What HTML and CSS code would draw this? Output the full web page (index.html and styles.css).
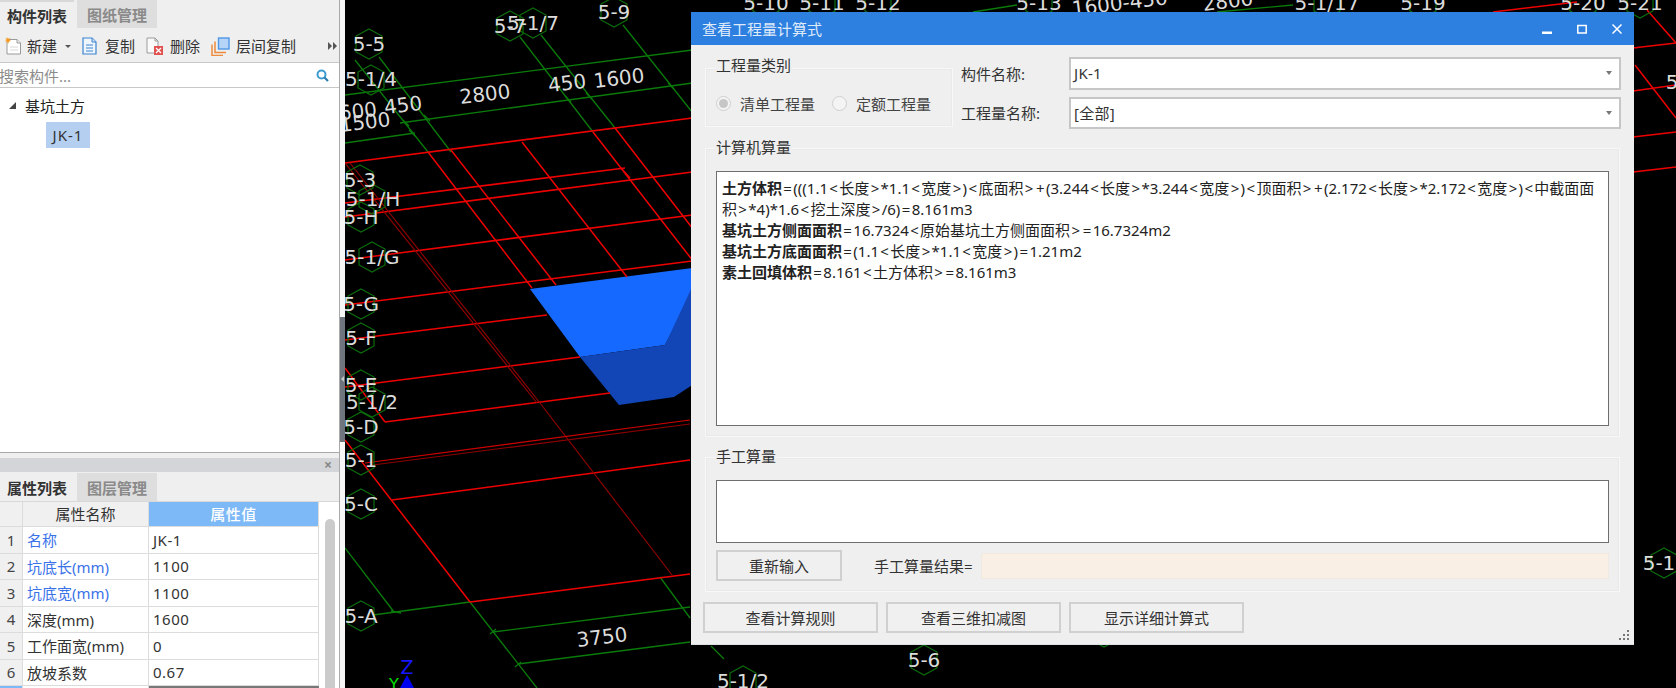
FILE: index.html
```html
<!DOCTYPE html>
<html lang="zh-CN">
<head>
<meta charset="utf-8">
<title>查看工程量计算式</title>
<link rel="stylesheet" href="styles.css">
</head>
<body>
<div class="app">
  <aside class="side">
    <section class="panel-top">
      <div class="tabs">
        <div class="tab active">构件列表</div>
        <div class="tab">图纸管理</div>
      </div>
      <div class="toolbar">
        <svg class="ico ico-new" viewBox="0 0 18 18"><path d="M5 2.500h8l3.500 3.500v11H3V5" fill="#fff" stroke="#9a9a9a"/><path d="M13 2.500V6h3.500" fill="#eee" stroke="#9a9a9a"/><path d="M6 10h8M6 13h8" stroke="#d8d8d8"/><path d="M3.500 0l.9 1.800L6.500 1 5.400 3l1.600 1-2 .4L4 7 3 4.600 1 4.500 2.400 3 1.500 1l2 .7z" fill="#f39a1e"/></svg>
        <span class="tool-label t-new">新建</span>
        <span class="caret"></span>
        <svg class="ico ico-copy" viewBox="0 0 15 18"><path d="M1 1h9l4 4v12H1z" fill="#eef5fd" stroke="#3c84cf" stroke-width="1.200"/><path d="M10 1v4h4" fill="#cfe2f7" stroke="#3c84cf"/><path d="M4 8h7M4 11h7M4 14h7" stroke="#3c84cf"/></svg>
        <span class="tool-label t-copy">复制</span>
        <svg class="ico ico-del" viewBox="0 0 18 18"><path d="M1 1h8l3 3v12H1z" fill="#fafafa" stroke="#9b9b9b"/><path d="M9 1v3h3" fill="none" stroke="#9b9b9b"/><rect x="8" y="9" width="9" height="9" fill="#e0514f"/><path d="M10 11l5 5M15 11l-5 5" stroke="#fff" stroke-width="1.300"/></svg>
        <span class="tool-label t-del">删除</span>
        <svg class="ico ico-floor" viewBox="0 0 19 19"><path d="M1 7.500v11h11" fill="none" stroke="#ee8a3c" stroke-width="1.500"/><path d="M4 4.500v11h11" fill="none" stroke="#ee8a3c" stroke-width="1.500"/><rect x="7.500" y="1" width="10.500" height="11" fill="#b6d4f8" stroke="#4f98e6" stroke-width="1.400"/></svg>
        <span class="tool-label t-floor">层间复制</span>
        <svg class="more" viewBox="0 0 9 8"><path d="M0 0l4 4-4 4zM5 0l4 4-4 4z" fill="#555"/></svg>
      </div>
      <div class="search">
        <span class="search-text">搜索构件...</span>
        <svg class="search-ico" viewBox="0 0 13 13"><circle cx="5.500" cy="5.500" r="4" fill="none" stroke="#3d9bd0" stroke-width="2"/><path d="M8.500 8.500l3.500 3.500" stroke="#2b7fae" stroke-width="2.200"/></svg>
      </div>
      <div class="tree">
        <div class="tree-root"><span class="tree-arrow"></span><span>基坑土方</span></div>
        <div class="tree-leaf">JK-1</div>
      </div>
    </section>
    <section class="panel-bottom">
      <div class="dock-head"><span class="dock-close">×</span></div>
      <div class="tabs tabs-props">
        <div class="tab active">属性列表</div>
        <div class="tab">图层管理</div>
      </div>
      <div class="props">
        <div class="prop-table">
          <div class="prop-row prop-head"><div class="c-idx"></div><div class="c-name">属性名称</div><div class="c-val">属性值</div></div>
          <div class="prop-row"><div class="c-idx">1</div><div class="c-name link">名称</div><div class="c-val">JK-1</div></div>
          <div class="prop-row"><div class="c-idx">2</div><div class="c-name link">坑底长(mm)</div><div class="c-val">1100</div></div>
          <div class="prop-row"><div class="c-idx">3</div><div class="c-name link">坑底宽(mm)</div><div class="c-val">1100</div></div>
          <div class="prop-row"><div class="c-idx">4</div><div class="c-name">深度(mm)</div><div class="c-val">1600</div></div>
          <div class="prop-row"><div class="c-idx">5</div><div class="c-name">工作面宽(mm)</div><div class="c-val">0</div></div>
          <div class="prop-row"><div class="c-idx">6</div><div class="c-name">放坡系数</div><div class="c-val">0.67</div></div>
          <div class="prop-row prop-sel"><div class="c-idx"></div><div class="c-name"></div><div class="c-val"></div></div>
        </div>
        <div class="scroll"><div class="thumb"></div></div>
      </div>
    </section>
  </aside>
  <div class="gutter"><div class="splitter"><span class="split-arrow"></span></div></div>
  <main class="canvas">
    <svg class="scene" viewBox="345 0 1331 688">
      <defs>
        <path id="hex" d="M0-15L13-8V8L0 15L-13 8V-8Z" fill="none" stroke="#0b6e0b" stroke-width="1.200"/>
      </defs>
      <g class="blue">
        <polygon points="530,289 700,267 700,277 665,345 580,357" fill="#1669ff"/>
        <polygon points="580,357 665,345 700,270 700,380 674,397 619,405" fill="#1245b5"/>
      </g>
      <g class="green" fill="none" stroke="#0a7a0a" stroke-width="1.300">
        <path d="M345 95L700 49M400 123L700 82M345 143L415 133"/>
        <path d="M379 57L451 152M355 60L428 152M520 37L593 132M541 35L615 128M623 25L700 122"/>
        <path d="M345 548L394 612M373 615L470 602M493 632L690 607M518 664L690 642M660 577L690 618"/>
        <path d="M470 602L537 688M973 12L1017 5M1217 12L1293 5M711 646L724 659"/>
        <path d="M403 120l6 6M424 115l6 6M409 130l6 6M565 96l6 6M586 93l6 6M668 83l6 6M391 611l10 2M490 634l6-5M515 667l6-5"/>
      </g>
      <g class="red" fill="none" stroke="#ee0000" stroke-width="1.500">
        <path d="M345 163L700 117"/>
        <path d="M345 203L625 168M345 217L700 171M345 260L700 214M345 305L700 260M345 340L547 315"/>
        <path d="M428 152L532 288M451 150L556 285M522 142L627 277M593 132L700 270M615 128L700 238M621 168L630 178"/>
        <path d="M345 368L385 422M345 440L470 602"/>
        <path d="M345 387L580 357M385 422L610 393M392 500L690 460M470 602L690 574"/>
        <path d="M1493 12L1577 2M1633 48L1676 43M1633 91L1676 85M1633 137L1676 132M1633 172L1676 167M1647 10L1676 43M1635 65L1676 118"/>
      </g>
      <g class="darkred" fill="none" stroke="#8f0000" stroke-width="1.200">
        <path d="M350 163L540 403L672 575M345 163L537 403M365 466L690 424"/>
        <path d="M365 463L690 420" stroke="#d00000"/>
      </g>
      <g class="hexes">
        <use href="#hex" x="369" y="44"/><use href="#hex" x="510" y="26"/><use href="#hex" x="533" y="23"/><use href="#hex" x="614" y="12"/>
        <use href="#hex" x="371" y="80"/><use href="#hex" x="360" y="180"/><use href="#hex" x="372" y="199"/><use href="#hex" x="361" y="217"/>
        <use href="#hex" x="372" y="257"/><use href="#hex" x="361" y="304"/><use href="#hex" x="361" y="338"/><use href="#hex" x="361" y="385"/>
        <use href="#hex" x="372" y="402"/><use href="#hex" x="361" y="427"/><use href="#hex" x="361" y="460"/><use href="#hex" x="361" y="504"/>
        <use href="#hex" x="361" y="616"/><use href="#hex" x="766" y="3"/><use href="#hex" x="822" y="3"/><use href="#hex" x="878" y="3"/>
        <use href="#hex" x="1039" y="3"/><use href="#hex" x="1327" y="3"/><use href="#hex" x="1423" y="3"/><use href="#hex" x="1583" y="3"/>
        <use href="#hex" x="1640" y="3"/><use href="#hex" x="1664" y="563"/><use href="#hex" x="924" y="660"/><use href="#hex" x="1104" y="632"/><use href="#hex" x="743" y="681"/>
      </g>
      <g class="labels">
        <text x="369" y="51">5-5</text><text x="510" y="33">5-7</text><text x="533" y="30">5-1/7</text><text x="614" y="19">5-9</text>
        <text x="371" y="86">5-1/4</text><text x="360" y="187">5-3</text><text x="373" y="206">5-1/H</text><text x="361" y="224">5-H</text>
        <text x="372" y="264">5-1/G</text><text x="361" y="311">5-G</text><text x="361" y="345">5-F</text><text x="361" y="392">5-E</text>
        <text x="372" y="409">5-1/2</text><text x="361" y="434">5-D</text><text x="361" y="467">5-1</text><text x="361" y="511">5-C</text>
        <text x="361" y="623">5-A</text><text x="766" y="10">5-10</text><text x="822" y="10">5-11</text><text x="878" y="10">5-12</text>
        <text x="1039" y="10">5-13</text><text x="1327" y="10">5-1/17</text><text x="1423" y="10">5-19</text><text x="1583" y="10">5-20</text>
        <text x="1640" y="10">5-21</text><text x="1672" y="89">5</text><text x="1659" y="570">5-1</text><text x="924" y="667">5-6</text><text x="743" y="688">5-1/2</text>
        <text x="358" y="118" transform="rotate(-7 358 112)">600</text>
        <text x="365" y="129" transform="rotate(-7 365 122)">1500</text>
        <text x="403" y="112" transform="rotate(-7 403 105)">450</text>
        <text x="485" y="101" transform="rotate(-7 485 94)">2800</text>
        <text x="567" y="90" transform="rotate(-7 567 83)">450</text>
        <text x="619" y="85" transform="rotate(-7 619 78)">1600</text>
        <text x="602" y="644" transform="rotate(-7 602 637)">3750</text>
        <text x="1120" y="10" transform="rotate(-7 1120 5)">1600-450</text>
        <text x="1228" y="8" transform="rotate(-7 1228 2)">2800</text>
      </g>
      <text class="axis-z" x="407" y="674">Z</text>
      <text class="axis-y" x="394" y="690">Y</text>
      <polygon points="407,675 400,688 414,688" fill="#0000f0"/>
    </svg>
  </main>
  <div class="dialog">
    <header class="titlebar">
      <span class="title">查看工程量计算式</span>
      <div class="win-btns">
        <svg viewBox="0 0 10 10" class="win"><rect x="0" y="7.500" width="10" height="2.500" fill="#fff"/></svg>
        <svg viewBox="0 0 10 10" class="win"><rect x=".8" y="1.500" width="8.400" height="7.500" fill="none" stroke="#fff" stroke-width="1.500"/></svg>
        <svg viewBox="0 0 10 10" class="win"><path d="M.5.500l9 9M9.500.500l-9 9" stroke="#fff" stroke-width="1.500"/></svg>
      </div>
    </header>
    <div class="dlg-body">
      <div class="top-row">
        <div class="group group-type">
          <span class="legend">工程量类别</span>
          <div class="radios">
            <span class="radio on"></span><span class="radio-text">清单工程量</span>
            <span class="radio"></span><span class="radio-text">定额工程量</span>
          </div>
        </div>
        <div class="form">
          <div class="form-row"><span class="form-label">构件名称:</span><div class="select"><span>JK-1</span><span class="sel-arrow"></span></div></div>
          <div class="form-row"><span class="form-label">工程量名称:</span><div class="select"><span>[全部]</span><span class="sel-arrow"></span></div></div>
        </div>
      </div>
      <div class="group group-calc">
        <span class="legend">计算机算量</span>
        <div class="formula">
          <b>土方体积</b><span class="ab">=</span>(((1.1<span class="ab">&lt;</span>长度<span class="ab">&gt;</span>*1.1<span class="ab">&lt;</span>宽度<span class="ab">&gt;</span>)<span class="ab">&lt;</span>底面积<span class="ab">&gt;</span><span class="ab">+</span>(3.244<span class="ab">&lt;</span>长度<span class="ab">&gt;</span>*3.244<span class="ab">&lt;</span>宽度<span class="ab">&gt;</span>)<span class="ab">&lt;</span>顶面积<span class="ab">&gt;</span><span class="ab">+</span>(2.172<span class="ab">&lt;</span>长度<span class="ab">&gt;</span>*2.172<span class="ab">&lt;</span>宽度<span class="ab">&gt;</span>)<span class="ab">&lt;</span>中截面面<br>
          积<span class="ab">&gt;</span>*4)*1.6<span class="ab">&lt;</span>挖土深度<span class="ab">&gt;</span>/6)<span class="ab">=</span>8.161m3<br>
          <b>基坑土方侧面面积</b><span class="ab">=</span>16.7324<span class="ab">&lt;</span>原始基坑土方侧面面积<span class="ab">&gt;</span><span class="ab">=</span>16.7324m2<br>
          <b>基坑土方底面面积</b><span class="ab">=</span>(1.1<span class="ab">&lt;</span>长度<span class="ab">&gt;</span>*1.1<span class="ab">&lt;</span>宽度<span class="ab">&gt;</span>)<span class="ab">=</span>1.21m2<br>
          <b>素土回填体积</b><span class="ab">=</span>8.161<span class="ab">&lt;</span>土方体积<span class="ab">&gt;</span><span class="ab">=</span>8.161m3
        </div>
      </div>
      <div class="group group-manual">
        <span class="legend">手工算量</span>
        <div class="manual-box"></div>
        <div class="manual-row">
          <div class="btn btn-reset">重新输入</div>
          <span class="result-label">手工算量结果=</span>
          <div class="result"></div>
        </div>
      </div>
      <div class="actions">
        <div class="btn btn-act">查看计算规则</div>
        <div class="btn btn-act">查看三维扣减图</div>
        <div class="btn btn-act">显示详细计算式</div>
      </div>
    </div>
    <svg class="grip" viewBox="0 0 10 10"><path d="M8 0h2v2H8zM8 4h2v2H8zM4 4h2v2H4zM8 8h2v2H8zM4 8h2v2H4zM0 8h2v2H0z" fill="#777"/></svg>
  </div>
</div>
</body>
</html>
```
FILE: styles.css
```css
* { box-sizing: border-box; }
html, body { margin: 0; height: 100%; overflow: hidden; background: #000; }
body { font-family: "Noto Sans", "Noto Sans CJK SC", sans-serif; font-size: 15px; color: #333; }
.app { display: flex; width: 1676px; height: 688px; position: relative; overflow: hidden; }

/* left dock */
.side { width: 340px; flex: none; display: flex; flex-direction: column; background: #efefef; border-right: 1px solid #a9a9a9; }
.panel-top { height: 453px; display: flex; flex-direction: column; border-bottom: 1px solid #aaa; }
.tabs { height: 28px; display: flex; flex: none; background: #efefef; }
.tab { width: 81px; display: flex; align-items: center; justify-content: center; background: #dedede; color: #8a8a8a; font-weight: 700; border-left: 1px solid #efefef; }
.tab.active { width: 74px; margin-right: 2px; background: #efefef; color: #333; border-left: 0; border-top: 2px solid #d8d8d8; }
.toolbar { height: 35px; flex: none; display: flex; align-items: center; padding: 2px 0 0 4px; border-bottom: 1px solid #c8c8c8; }
.ico { flex: none; display: block; }
.ico-new { width: 18px; height: 18px; }
.ico-copy { width: 15px; height: 18px; margin-left: 11px; }
.ico-del { width: 18px; height: 18px; margin-left: 0; }
.ico-floor { width: 19px; height: 19px; }
.tool-label { white-space: nowrap; line-height: 20px; }
.t-new { margin-left: 5px; }
.caret { width: 0; height: 0; margin-left: 8px; border: 3px solid transparent; border-top: 3.500px solid #555; border-bottom: 0; }
.t-copy { margin-left: 8px; margin-right: 11px; }
.t-del { margin-left: 6px; margin-right: 11px; }
.t-floor { margin-left: 6px; }
.more { width: 9px; height: 8px; margin-left: 32px; }
.search { height: 25px; flex: none; display: flex; align-items: center; justify-content: space-between; background: #fff; padding-right: 10px; border-bottom: 1px solid #c8c8c8; overflow: hidden; }
.search-text { color: #8c8c8c; margin-left: -1px; }
.search-ico { width: 13px; height: 13px; }
.tree { flex: 1; background: #fff; padding-top: 5px; }
.tree-root { display: flex; align-items: center; height: 24px; padding-left: 9px; color: #222; }
.tree-arrow { width: 0; height: 0; margin-right: 9px; border-left: 7px solid transparent; border-bottom: 7px solid #444; }
.tree-leaf { width: 44px; height: 26px; margin-left: 46px; margin-top: 5px; background: #b5cff0; display: flex; align-items: center; justify-content: center; letter-spacing: 1px; }

.panel-bottom { flex: 1; min-height: 0; margin-top: 5px; display: flex; flex-direction: column; overflow: hidden; }
.dock-head { height: 14px; flex: none; background: #d3d5d8; display: flex; align-items: center; justify-content: flex-end; padding-right: 7px; }
.dock-close { color: #888; font-size: 14px; line-height: 14px; font-weight: 700; }
.tabs-props { margin-top: 1px; height: 29px; border-bottom: 1px solid #d8d8d8; }
.tabs-props .tab.active { border-top: 0; }
.props { flex: 1; min-height: 0; display: flex; background: #fff; overflow: hidden; }
.prop-table { width: 319px; flex: none; }
.prop-row { display: grid; grid-template-columns: 23px 126px 170px; height: 26.500px; }
.prop-row > div { display: flex; align-items: center; border-right: 1px solid #dcdcdc; border-bottom: 1px solid #dcdcdc; white-space: nowrap; }
.c-idx { justify-content: center; background: #f0f0f0; color: #444; }
.c-name { padding-left: 4px; color: #333; }
.c-name.link { color: #3a72e8; }
.c-val { padding-left: 4px; color: #333; letter-spacing: .5px; }
.prop-head { height: 25px; }
.prop-head > div { padding-bottom: 1px; }
.prop-head .c-name { justify-content: center; background: #f0f0f0; padding-left: 0; }
.prop-head .c-val { justify-content: center; background: #7db8f7; color: #fff; padding-left: 0; font-weight: 500; }
.prop-sel .c-idx { background: #7db8f7; }
.prop-sel .c-val { border: 2px solid #777; }
.scroll { flex: 1; position: relative; padding: 17px 3px 0 6px; }
.thumb { width: 10px; height: 200px; background: #cbcbcb; border-radius: 5px 5px 0 0; }

/* splitter */
.gutter { width: 5px; flex: none; background: #f6f6f6; display: flex; flex-direction: column; padding-top: 317px; }
.splitter { height: 125px; background: #6f757c; display: flex; align-items: center; justify-content: center; }
.split-arrow { width: 0; height: 0; margin-top: -1px; border: 3px solid transparent; border-left: 0; border-right: 3px solid #c6c6c6; }

/* 3D canvas */
.canvas { flex: 1; min-width: 0; background: #000; overflow: hidden; }
.scene { display: block; width: 1331px; height: 688px; }
.labels text { font-family: "DejaVu Sans", sans-serif; font-size: 20px; fill: #dcdcdc; text-anchor: middle; }
.axis-z { font-family: "DejaVu Sans", sans-serif; font-size: 19px; fill: #1616ff; text-anchor: middle; }
.axis-y { font-family: "DejaVu Sans", sans-serif; font-size: 16px; fill: #00e000; text-anchor: middle; }

/* dialog */
.dialog { position: absolute; left: 691px; top: 12px; width: 943px; height: 633px; background: #efefef; border-bottom: 1px solid #dcdfe3; display: flex; flex-direction: column; }
.titlebar { height: 33px; flex: none; background: #2d7fe0; color: #dfeafa; display: flex; align-items: center; justify-content: space-between; padding: 0 12px 0 11px; }
.title { font-size: 15px; }
.win-btns { display: flex; gap: 25px; align-items: center; }
.win { width: 10px; height: 10px; display: block; }
.dlg-body { flex: 1; padding: 12px 12px 0; display: flex; flex-direction: column; }
.top-row { height: 72px; flex: none; display: flex; margin: 0 2px; }
.group { position: relative; border: 1px solid #f8f8f8; box-shadow: inset 0 0 0 1px #e9e9e9; }
.legend { position: absolute; left: 9px; top: -12px; padding: 0 1px; background: #efefef; line-height: 20px; white-space: nowrap; }
.group-type { width: 248px; height: 59px; margin-top: 11px; flex: none; }
.group-type .legend { top: -14px; }
.radios { height: 100%; display: flex; align-items: center; padding: 12px 0 0 10px; }
.radio { width: 15px; height: 15px; border-radius: 50%; border: 1px solid #cfcfcf; background: #f4f4f4; flex: none; position: relative; display: flex; align-items: center; justify-content: center; }
.radio.on::after { content: ""; width: 9px; height: 9px; border-radius: 50%; background: #c6c6c6; }
.radio-text { margin-left: 9px; margin-right: 17px; color: #444; white-space: nowrap; }
.form { flex: 1; margin-left: 8px; display: flex; flex-direction: column; gap: 7px; }
.form-row { height: 33px; display: flex; align-items: center; color: #333; }
.form-label { width: 108px; flex: none; white-space: nowrap; }
.select { width: 552px; height: 100%; border: 2px solid #c6c6c6; background: #fff; display: flex; align-items: center; justify-content: space-between; padding: 0 7px 0 3px; letter-spacing: .3px; }
.sel-arrow { width: 0; height: 0; border: 3.500px solid transparent; border-top: 4px solid #777; border-bottom: 0; }
.group-calc { height: 289px; flex: none; margin: 19px 2px 0; padding: 22px 10px 0; }
.formula { height: 255px; border: 1px solid #6e6e6e; background: #fff; padding: 6px 5px; line-height: 21.100px; color: #222; white-space: nowrap; overflow: hidden; }
.formula b { font-weight: 700; }
.ab { padding: 0 1.350px; }
.group-manual { height: 135px; flex: none; margin: 20px 2px 0; padding: 22px 10px 0; }
.manual-box { height: 63px; border: 1px solid #6e6e6e; background: #fff; }
.manual-row { display: flex; align-items: center; margin-top: 7px; }
.btn { height: 31px; flex: none; border: 2px solid #d0d0d0; background: #f0f0f0; display: flex; align-items: center; justify-content: center; color: #333; }
.btn-reset { width: 126px; }
.result-label { margin-left: 32px; white-space: nowrap; }
.result { width: 628px; height: 26px; margin-left: 8px; background: #f9efe4; border: 1px solid #efe9e1; }
.actions { display: flex; gap: 8px; margin-top: 10px; }
.btn-act { width: 175px; }
.grip { position: absolute; right: 5px; bottom: 4px; width: 10px; height: 10px; }
```
